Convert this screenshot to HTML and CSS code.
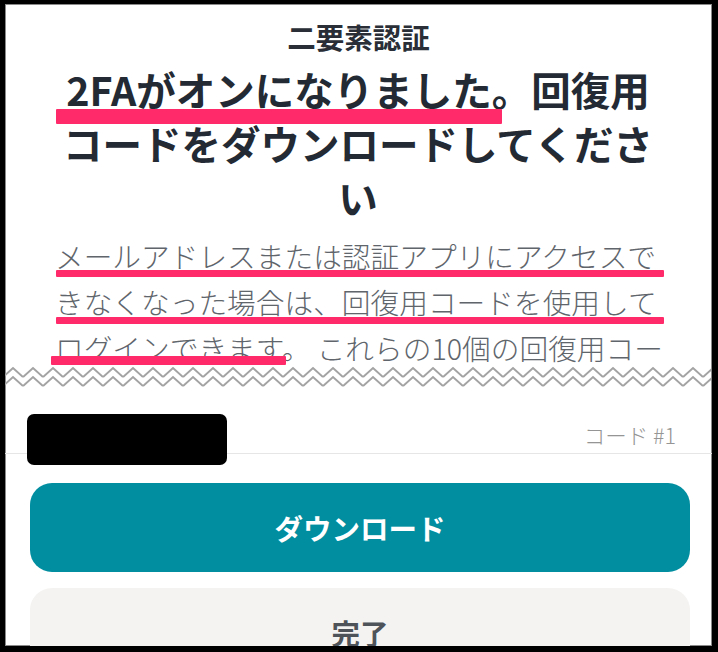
FILE: index.html
```html
<!DOCTYPE html>
<html lang="ja">
<head>
<meta charset="utf-8">
<title>二要素認証</title>
<link rel="stylesheet" href="styles.css">
</head>
<body>
<div class="frame">
  <section class="top">
    <h2 class="title">二要素認証</h2>
    <h1 class="heading">2FAがオンになりました。回復用コードをダウンロードしてください</h1>
    <p class="para">メールアドレスまたは認証アプリにアクセスできなくなった場合は、回復用コードを使用してログインできます。 これらの10個の回復用コードを安全な場所に保管してください。</p>
    <span class="mark mark-h"></span>
    <span class="mark mark-p1"></span>
    <span class="mark mark-p2"></span>
    <span class="mark mark-p3"></span>
  </section>
  <svg class="zigzag" width="706" height="24" viewBox="0 0 706 24" aria-hidden="true">
    <defs>
      <pattern id="zz" width="20" height="24" patternUnits="userSpaceOnUse" x="-2">
        <path d="M0 11 L10 2 L20 11 M0 20 L10 11 L20 20" fill="none" stroke="#a3a3a3" stroke-width="2"/>
      </pattern>
    </defs>
    <rect x="0" y="0" width="706" height="24" fill="url(#zz)"/>
  </svg>
  <section class="bottom">
    <div class="code-row">
      <span class="code-label">コード #1</span>
    </div>
    <span class="redact"></span>
    <button class="btn btn-primary">ダウンロード</button>
    <button class="btn btn-secondary">完了</button>
  </section>
</div>
</body>
</html>
```
FILE: styles.css
```css
* { box-sizing: border-box; }
html, body { margin: 0; padding: 0; background: #000; }
body {
  font-family: "Noto Sans CJK JP", "Noto Sans", sans-serif;
  width: 718px;
  height: 652px;
  overflow: hidden;
}
.frame {
  width: 718px;
  height: 652px;
  border-style: solid;
  border-color: #000;
  border-width: 4px 6px 6px 5px;
  background: #fff;
  box-shadow: inset 0 0 0 1px #8a8a8a;
  display: flex;
  flex-direction: column;
}
.top {
  position: relative;
  height: 362px;
  flex: none;
  overflow: hidden;
  padding: 13px 50px 0 50px;
}
.title {
  margin: 0;
  font-size: 28.5px;
  line-height: 40px;
  font-weight: 700;
  color: #2a2f37;
  text-align: center;
}
.heading {
  margin: 5px 0 0 0;
  width: 606px;
  font-size: 39.5px;
  line-height: 54px;
  font-weight: 700;
  color: #242a33;
  text-align: center;
}
.para {
  margin: 9px 0 0 0;
  width: 612px;
  font-size: 28.7px;
  line-height: 46px;
  font-weight: 300;
  color: #60656c;
  text-align: left;
}
.mark {
  position: absolute;
  background: #fe2a6a;
  border-radius: 1px;
}
.mark-h { left: 51px; top: 105px; width: 446px; height: 15px; }
.mark-p1 { left: 51px; top: 266px; width: 608px; height: 7px; }
.mark-p2 { left: 51px; top: 313px; width: 608px; height: 7px; }
.mark-p3 { left: 46px; top: 352px; width: 235px; height: 9px; }
.zigzag {
  display: block;
  flex: none;
  width: 706px;
  height: 24px;
}
.bottom {
  position: relative;
  flex: 1;
  overflow: hidden;
}
.code-row {
  height: 64px;
  border-bottom: 1px solid #e6e6e6;
  display: flex;
  justify-content: flex-end;
  align-items: flex-end;
  padding: 0 36px 4px 0;
}
.code-label {
  font-size: 21.5px;
  line-height: 28px;
  color: #959595;
  font-weight: 300;
}
.redact {
  position: absolute;
  left: 22px;
  top: 24px;
  width: 200px;
  height: 51px;
  background: #000;
  border-radius: 7px;
}
.btn {
  display: flex;
  align-items: center;
  justify-content: center;
  width: 660px;
  height: 89px;
  margin: 0 21px 0 25px;
  border: none;
  border-radius: 22px;
  font-family: "Noto Sans CJK JP", "Noto Sans", sans-serif;
  font-size: 28.5px;
  font-weight: 700;
  padding: 0;
  flex: none;
}
.btn-primary {
  margin-top: 29px;
  background: #018ea0;
  color: #fff;
}
.btn-secondary {
  margin-top: 16px;
  background: #f4f3f2;
  color: #4e535a;
}
```
